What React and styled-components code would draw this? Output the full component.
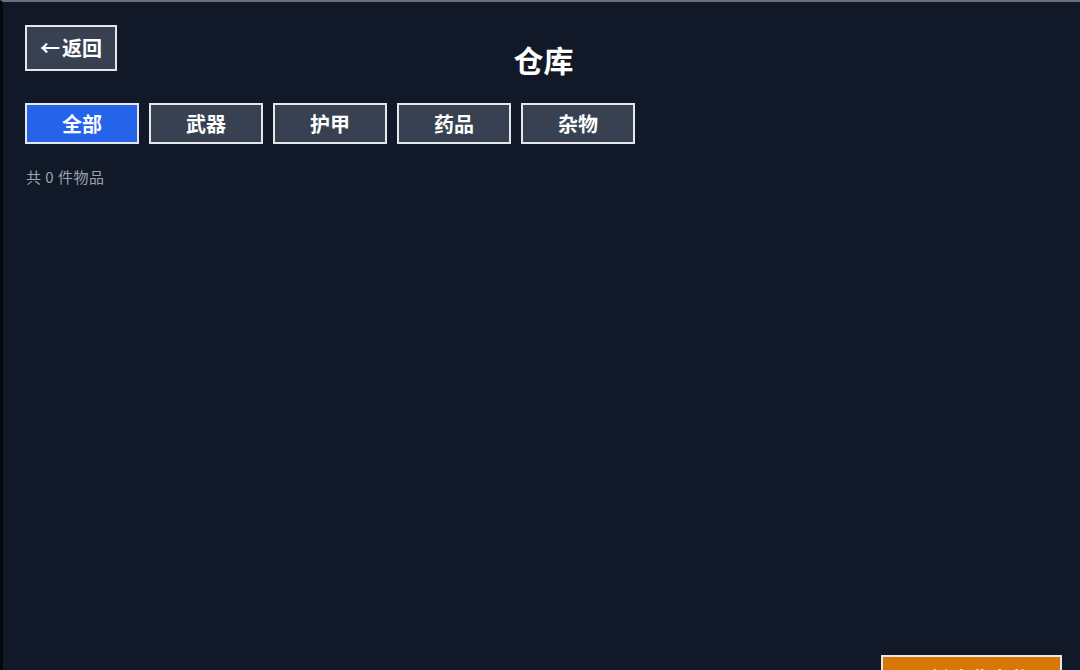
import React, { useState } from "react";
import styled, { createGlobalStyle } from "styled-components";

const Global = createGlobalStyle`
  html, body { margin: 0; padding: 0; background: #000; }
  body { font-family: "Noto Sans CJK SC", "Noto Sans", sans-serif; }
  * { box-sizing: border-box; }
`;

const Root = styled.div`
  min-height: 100vh;
  background: #111827;
  border-top: 2px solid #6e6e76;
  border-left: 3px solid #05070c;
  padding: 23px 18px 40px 22px;
  display: flex;
  flex-direction: column;
  color: #fff;
`;

const Header = styled.header`
  display: grid;
  grid-template-columns: 1fr auto 1fr;
  align-items: start;
`;

const BackButton = styled.button`
  justify-self: start;
  height: 46px;
  padding: 0 13px;
  background: #374151;
  border: 2px solid #e5e7eb;
  color: #fff;
  font-family: inherit;
  font-size: 20px;
  font-weight: 700;
  line-height: 42px;
  cursor: pointer;
  display: flex;
  align-items: center;
  gap: 2px;
`;

const Title = styled.h1`
  margin: 15px 0 0;
  font-size: 30px;
  line-height: 38px;
  font-weight: 700;
  color: #fff;
`;

const Tabs = styled.nav`
  display: flex;
  gap: 10px;
  margin-top: 25px;
`;

const Tab = styled.button`
  width: 114px;
  height: 41px;
  background: ${(p) => (p.$active ? "#2563eb" : "#374151")};
  border: 2px solid #e5e7eb;
  color: #fff;
  font-family: inherit;
  font-size: 20px;
  font-weight: 700;
  cursor: pointer;
  padding: 0;
`;

const Count = styled.p`
  margin: 23px 0 0 1px;
  font-size: 15px;
  line-height: 20px;
  letter-spacing: 0.5px;
  color: #9ca3af;
`;

const ItemArea = styled.section`
  flex: 1;
  min-height: 444px;
  margin-top: 12px;
`;

const Footer = styled.footer`
  display: flex;
  justify-content: flex-end;
  margin-top: 12px;
`;

const ActionButton = styled.button`
  width: 181px;
  height: 46px;
  background: #d97706;
  border: 2px solid #e5e7eb;
  color: #fff;
  font-family: inherit;
  font-size: 20px;
  font-weight: 700;
  cursor: pointer;
`;

const categories = ["全部", "武器", "护甲", "药品", "杂物"];

export default function App() {
  const [active, setActive] = useState("全部");
  return (
    <>
      <Global />
      <Root>
        <Header>
          <BackButton>
            <span>←</span>
            <span>返回</span>
          </BackButton>
          <Title>仓库</Title>
          <div />
        </Header>
        <Tabs>
          {categories.map((c) => (
            <Tab key={c} $active={c === active} onClick={() => setActive(c)}>
              {c}
            </Tab>
          ))}
        </Tabs>
        <Count>共 0 件物品</Count>
        <ItemArea />
        <Footer>
          <ActionButton>一键出售杂物</ActionButton>
        </Footer>
      </Root>
    </>
  );
}
